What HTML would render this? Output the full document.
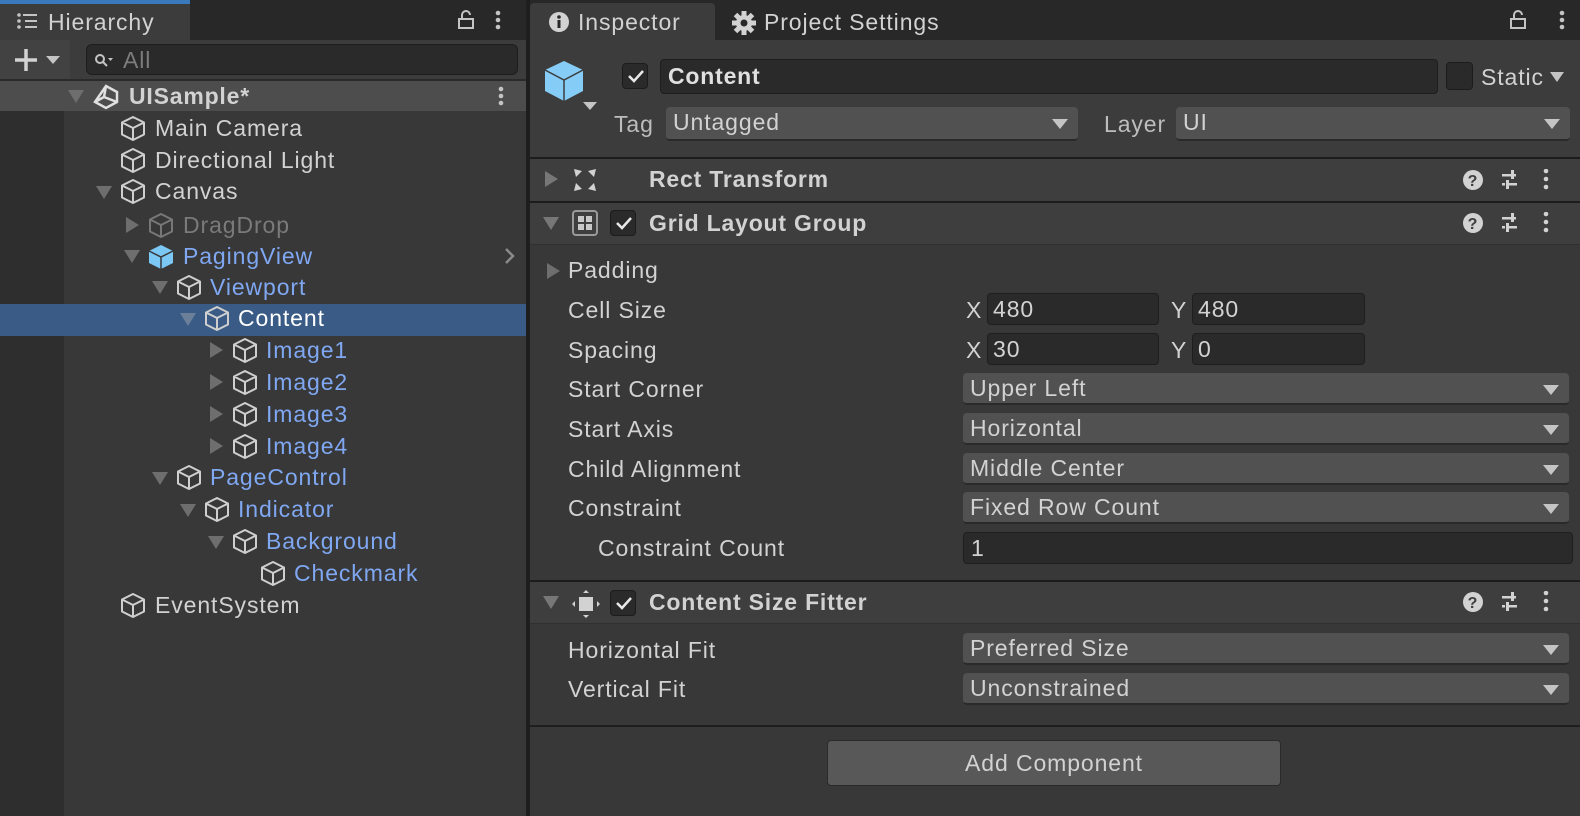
<!DOCTYPE html>
<html><head><meta charset="utf-8"><style>
*{margin:0;padding:0;box-sizing:border-box}
body{width:1580px;height:816px;background:#383838;font-family:"Liberation Sans",sans-serif;font-size:23px;letter-spacing:0.9px;color:#d2d2d2;position:relative;overflow:hidden}
.a{position:absolute}
.t{position:absolute;line-height:32px;white-space:nowrap}
.b{color:#7fa7f2}
.tri{position:absolute;width:0;height:0}
.down{border-left:8px solid transparent;border-right:8px solid transparent;border-top:13px solid #6e6e6e}
.right{border-top:8px solid transparent;border-bottom:8px solid transparent;border-left:13px solid #6e6e6e}
.dd{position:absolute;background:#515151;border-radius:4px;height:32px;border-bottom:2px solid #2a2a2a;padding-left:7px;line-height:31px}
.dd::after{content:"";position:absolute;right:10px;top:12px;border-left:8px solid transparent;border-right:8px solid transparent;border-top:10px solid #c4c4c4}
.fld{position:absolute;background:#2a2a2a;border:1px solid #1e1e1e;border-radius:4px;height:32px;padding-left:5px;line-height:30px}
.cb{position:absolute;width:26px;height:26px;background:#2a2a2a;border:1px solid #1c1c1c;border-radius:4px}
.hdr{position:absolute;left:530px;width:1050px;background:#3e3e3e;border-top:2px solid #1c1c1c}
.bold{font-weight:bold;letter-spacing:0.8px}
</style></head><body>
<div class="a" style="left:0;top:0;width:527px;height:40px;background:#282828"></div>
<div class="a" style="left:0;top:0;width:190px;height:4px;background:#3a79bb"></div>
<div class="a" style="left:0;top:4px;width:190px;height:36px;background:#3c3c3c"></div>
<svg class="a" style="left:16px;top:12px" width="24" height="20"><g fill="#c4c4c4"><circle cx="3" cy="3" r="1.8"/><circle cx="3" cy="9" r="1.8"/><circle cx="3" cy="15" r="1.8"/><rect x="7" y="2" width="14" height="2"/><rect x="9" y="8" width="12" height="2"/><rect x="9" y="14" width="12" height="2"/></g></svg>
<div class="t" style="left:48px;top:6px">Hierarchy</div>
<svg class="a" style="left:457px;top:9px" width="18" height="22"><path d="M2 10 V19 H16 V10 Z M5 10 V6 a4 4 0 0 1 8 0" fill="none" stroke="#c4c4c4" stroke-width="2"/></svg>
<svg class="a" style="left:494px;top:10px" width="8" height="22"><g fill="#c4c4c4"><circle cx="4" cy="3" r="2.3"/><circle cx="4" cy="10" r="2.3"/><circle cx="4" cy="17" r="2.3"/></g></svg>
<div class="a" style="left:0;top:40px;width:527px;height:41px;background:#3c3c3c"></div>
<div class="a" style="left:0;top:40px;width:70px;height:39px;background:#424242"></div>
<svg class="a" style="left:12px;top:47px" width="52" height="26"><path d="M3 13 H25 M14 2 V24" stroke="#d2d2d2" stroke-width="3.5"/><path d="M34 9 H48 L41 17 Z" fill="#c4c4c4"/></svg>
<div class="a" style="left:86px;top:44px;width:432px;height:31px;background:#2a2a2a;border:1px solid #1d1d1d;border-radius:6px"></div>
<svg class="a" style="left:94px;top:52px" width="22" height="16"><circle cx="6" cy="7" r="4" fill="none" stroke="#c4c4c4" stroke-width="2"/><path d="M9 10 L13 14" stroke="#c4c4c4" stroke-width="2"/><path d="M14 6 H19 L16.5 9Z" fill="#c4c4c4"/></svg>
<div class="t" style="left:123px;top:44px;color:#7c7c7c">All</div>
<div class="a" style="left:0;top:79px;width:527px;height:2px;background:#2a2a2a"></div>
<div class="a" style="left:0;top:81px;width:527px;height:30px;background:#4d4d4d"></div>
<div class="a" style="left:0;top:111px;width:64px;height:705px;background:#2e2e2e"></div>
<div class="a" style="left:0;top:304px;width:526px;height:32px;background:#395b85"></div>
<div class="tri down" style="left:68px;top:90px"></div>
<svg class="a" style="left:92px;top:83px" width="28" height="28"><path d="M14 3 L25 9 V19 L14 25 L3 19 Z M14 3 L12 14 L3 19 M12 14 L25 19" fill="none" stroke="#e0e0e0" stroke-width="2.5"/></svg>
<div class="t bold" style="left:129px;top:80px">UISample*</div>
<svg class="a" style="left:497px;top:86px" width="8" height="22"><g fill="#c4c4c4"><circle cx="4" cy="3" r="2.3"/><circle cx="4" cy="10" r="2.3"/><circle cx="4" cy="17" r="2.3"/></g></svg>
<svg width="0" height="0" style="position:absolute"><defs><g id="cube"><path d="M13 2 L24 7.5 V19.5 L13 25 L2 19.5 V7.5 Z M2 7.5 L13 13 L24 7.5 M13 13 V25" fill="none" stroke-width="2" stroke-linejoin="round"/></g></defs></svg>
<svg class="a" style="left:120px;top:115px" width="27" height="27" stroke="#cfcfcf"><use href="#cube"/></svg><div class="t" style="left:155px;top:112px">Main Camera</div>
<svg class="a" style="left:120px;top:147px" width="27" height="27" stroke="#cfcfcf"><use href="#cube"/></svg><div class="t" style="left:155px;top:144px">Directional Light</div>
<div class="tri down" style="left:96px;top:186px"></div>
<svg class="a" style="left:120px;top:178px" width="27" height="27" stroke="#cfcfcf"><use href="#cube"/></svg><div class="t" style="left:155px;top:175px">Canvas</div>
<div class="tri right" style="left:126px;top:217px"></div>
<svg class="a" style="left:148px;top:212px" width="27" height="27" stroke="#777"><use href="#cube"/></svg><div class="t" style="left:183px;top:209px;color:#7a7a7a">DragDrop</div>
<div class="tri down" style="left:124px;top:250px"></div>
<svg class="a" style="left:148px;top:243px" width="27" height="27"><path d="M13 2 L25 8 V20 L13 26 L1 20 V8 Z" fill="#7cc8f4"/><path d="M1 8 L13 14 L25 8 M13 14 V26" stroke="#383838" stroke-width="1.5" fill="none"/></svg><div class="t b" style="left:183px;top:240px">PagingView</div>
<svg class="a" style="left:504px;top:247px" width="12" height="18"><path d="M2 2 L9 9 L2 16" stroke="#8a8a8a" stroke-width="2.5" fill="none"/></svg>
<div class="tri down" style="left:152px;top:281px"></div>
<svg class="a" style="left:176px;top:274px" width="27" height="27" stroke="#cfcfcf"><use href="#cube"/></svg><div class="t b" style="left:210px;top:271px">Viewport</div>
<div class="tri down" style="left:180px;top:313px;border-top-color:#6b7f99"></div>
<svg class="a" style="left:204px;top:305px" width="27" height="27" stroke="#cfcfcf"><use href="#cube"/></svg><div class="t" style="left:238px;top:302px;color:#fff">Content</div>
<div class="tri right" style="left:210px;top:342px"></div>
<svg class="a" style="left:232px;top:337px" width="27" height="27" stroke="#cfcfcf"><use href="#cube"/></svg><div class="t b" style="left:266px;top:334px">Image1</div>
<div class="tri right" style="left:210px;top:374px"></div>
<svg class="a" style="left:232px;top:369px" width="27" height="27" stroke="#cfcfcf"><use href="#cube"/></svg><div class="t b" style="left:266px;top:366px">Image2</div>
<div class="tri right" style="left:210px;top:406px"></div>
<svg class="a" style="left:232px;top:401px" width="27" height="27" stroke="#cfcfcf"><use href="#cube"/></svg><div class="t b" style="left:266px;top:398px">Image3</div>
<div class="tri right" style="left:210px;top:438px"></div>
<svg class="a" style="left:232px;top:433px" width="27" height="27" stroke="#cfcfcf"><use href="#cube"/></svg><div class="t b" style="left:266px;top:430px">Image4</div>
<div class="tri down" style="left:152px;top:472px"></div>
<svg class="a" style="left:176px;top:464px" width="27" height="27" stroke="#cfcfcf"><use href="#cube"/></svg><div class="t b" style="left:210px;top:461px">PageControl</div>
<div class="tri down" style="left:180px;top:504px"></div>
<svg class="a" style="left:204px;top:496px" width="27" height="27" stroke="#cfcfcf"><use href="#cube"/></svg><div class="t b" style="left:238px;top:493px">Indicator</div>
<div class="tri down" style="left:208px;top:536px"></div>
<svg class="a" style="left:232px;top:528px" width="27" height="27" stroke="#cfcfcf"><use href="#cube"/></svg><div class="t b" style="left:266px;top:525px">Background</div>
<svg class="a" style="left:260px;top:560px" width="27" height="27" stroke="#cfcfcf"><use href="#cube"/></svg><div class="t b" style="left:294px;top:557px">Checkmark</div>
<svg class="a" style="left:120px;top:592px" width="27" height="27" stroke="#cfcfcf"><use href="#cube"/></svg><div class="t" style="left:155px;top:589px">EventSystem</div>
<div class="a" style="left:526px;top:0;width:4px;height:816px;background:#1e1e1e"></div>
<div class="a" style="left:530px;top:0;width:1050px;height:40px;background:#282828"></div>
<div class="a" style="left:530px;top:3px;width:185px;height:37px;background:#3c3c3c;border-radius:4px 4px 0 0"></div>
<svg class="a" style="left:548px;top:11px" width="22" height="22"><circle cx="11" cy="11" r="10" fill="#d2d2d2"/><rect x="9.5" y="9" width="3" height="8" fill="#282828"/><circle cx="11" cy="6" r="1.8" fill="#282828"/></svg>
<div class="t" style="left:578px;top:6px">Inspector</div>
<svg class="a" style="left:731px;top:10px" width="26" height="26" viewBox="0 0 26 26"><g fill="#d2d2d2"><circle cx="13" cy="13" r="8"/><g stroke="#d2d2d2" stroke-width="5"><path d="M13 1 V25 M1 13 H25 M4.5 4.5 L21.5 21.5 M21.5 4.5 L4.5 21.5"/></g></g><circle cx="13" cy="13" r="3.5" fill="#282828"/></svg>
<div class="t" style="left:764px;top:6px">Project Settings</div>
<svg class="a" style="left:1509px;top:9px" width="18" height="22"><path d="M2 10 V19 H16 V10 Z M5 10 V6 a4 4 0 0 1 8 0" fill="none" stroke="#c4c4c4" stroke-width="2"/></svg>
<svg class="a" style="left:1558px;top:10px" width="8" height="22"><g fill="#c4c4c4"><circle cx="4" cy="3" r="2.3"/><circle cx="4" cy="10" r="2.3"/><circle cx="4" cy="17" r="2.3"/></g></svg>
<div class="a" style="left:530px;top:40px;width:1050px;height:117px;background:#3c3c3c"></div>
<svg class="a" style="left:544px;top:60px" width="42" height="44"><path d="M20 1 L39 10 V31 L20 41 L1 31 V10 Z" fill="#85cdf7"/><path d="M1 10 L20 20 L39 10 M20 20 V41" stroke="#3c3c3c" stroke-width="1.5" fill="none"/></svg>
<div class="tri" style="left:583px;top:102px;border-left:7px solid transparent;border-right:7px solid transparent;border-top:8px solid #c4c4c4"></div>
<div class="cb" style="left:622px;top:63px"></div>
<svg class="a" style="left:626px;top:67px" width="20" height="18"><path d="M3 9 L8 14 L17 4" stroke="#e8e8e8" stroke-width="2.5" fill="none"/></svg>
<div class="fld bold" style="left:660px;top:59px;width:778px;height:35px;line-height:33px;padding-left:7px;color:#e0e0e0">Content</div>
<div class="cb" style="left:1446px;top:62px;width:27px;height:28px"></div>
<div class="t" style="left:1481px;top:61px">Static</div>
<div class="tri" style="left:1550px;top:72px;border-left:7px solid transparent;border-right:7px solid transparent;border-top:10px solid #c4c4c4"></div>
<div class="t" style="left:614px;top:108px;color:#bdbdbd">Tag</div>
<div class="dd" style="left:666px;top:107px;width:412px;height:34px">Untagged</div>
<div class="t" style="left:1104px;top:108px;color:#bdbdbd">Layer</div>
<div class="dd" style="left:1176px;top:107px;width:394px;height:34px">UI</div>
<div class="hdr" style="top:157px;height:44px"></div>
<div class="tri right" style="left:545px;top:171px;border-left-color:#777"></div>
<svg class="a" style="left:572px;top:167px" width="26" height="26"><g fill="#d2d2d2"><path d="M2 2 L10 4 L4 10Z M24 2 L16 4 L22 10Z M2 24 L10 22 L4 16Z M24 24 L16 22 L22 16Z"/></g></svg>
<div class="t bold" style="left:649px;top:163px">Rect Transform</div>
<svg width="0" height="0" style="position:absolute"><defs><g id="icons"><circle cx="11" cy="11" r="10" fill="#d2d2d2"/><text x="11" y="17" font-size="16" font-weight="bold" text-anchor="middle" fill="#3e3e3e" font-family="Liberation Sans">?</text><g fill="#d2d2d2"><rect x="40" y="5" width="14" height="2.5"/><rect x="40" y="14" width="3" height="2.5"/><rect x="46" y="14" width="9" height="2.5"/><rect x="49" y="1" width="3" height="9"/><rect x="44" y="11" width="3" height="9"/><circle cx="84" cy="2" r="2.3"/><circle cx="84" cy="10" r="2.3"/><circle cx="84" cy="18" r="2.3"/></g></g></defs></svg>
<svg class="a" style="left:1462px;top:169px" width="92" height="24"><use href="#icons"/></svg>
<div class="hdr" style="top:201px;height:43px"></div>
<div class="tri down" style="left:543px;top:217px;border-top-color:#777"></div>
<svg class="a" style="left:572px;top:210px" width="26" height="26"><rect x="1" y="1" width="24" height="24" rx="3" fill="none" stroke="#9a9a9a" stroke-width="2"/><g fill="#c8c8c8"><rect x="6" y="6" width="6" height="6"/><rect x="14" y="6" width="6" height="6"/><rect x="6" y="14" width="6" height="6"/><rect x="14" y="14" width="6" height="6"/></g></svg>
<div class="cb" style="left:610px;top:210px"></div>
<svg class="a" style="left:614px;top:214px" width="20" height="18"><path d="M3 9 L8 14 L17 4" stroke="#e8e8e8" stroke-width="2.5" fill="none"/></svg>
<div class="t bold" style="left:649px;top:207px">Grid Layout Group</div>
<svg class="a" style="left:1462px;top:212px" width="92" height="24"><use href="#icons"/></svg>
<div class="a" style="left:530px;top:244px;width:1050px;height:1px;background:#303030"></div>
<div class="tri right" style="left:547px;top:263px"></div>
<div class="t" style="left:568px;top:254px">Padding</div>
<div class="t" style="left:568px;top:294px">Cell Size</div>
<div class="t" style="left:966px;top:294px">X</div><div class="fld" style="left:987px;top:293px;width:172px">480</div>
<div class="t" style="left:1171px;top:294px">Y</div><div class="fld" style="left:1192px;top:293px;width:173px">480</div>
<div class="t" style="left:568px;top:334px">Spacing</div>
<div class="t" style="left:966px;top:334px">X</div><div class="fld" style="left:987px;top:333px;width:172px">30</div>
<div class="t" style="left:1171px;top:334px">Y</div><div class="fld" style="left:1192px;top:333px;width:173px">0</div>
<div class="t" style="left:568px;top:373px">Start Corner</div><div class="dd" style="left:963px;top:373px;width:606px">Upper Left</div>
<div class="t" style="left:568px;top:413px">Start Axis</div><div class="dd" style="left:963px;top:413px;width:606px">Horizontal</div>
<div class="t" style="left:568px;top:453px">Child Alignment</div><div class="dd" style="left:963px;top:453px;width:606px">Middle Center</div>
<div class="t" style="left:568px;top:492px">Constraint</div><div class="dd" style="left:963px;top:492px;width:606px">Fixed Row Count</div>
<div class="t" style="left:598px;top:532px">Constraint Count</div><div class="fld" style="left:963px;top:532px;width:610px;padding-left:7px">1</div>
<div class="hdr" style="top:580px;height:43px"></div>
<div class="tri down" style="left:543px;top:596px;border-top-color:#777"></div>
<svg class="a" style="left:572px;top:590px" width="28" height="28"><rect x="7" y="7" width="14" height="14" fill="#d2d2d2"/><g fill="#d2d2d2"><path d="M11 3 H17 L14 0Z M11 25 H17 L14 28Z M3 11 V17 L0 14Z M25 11 V17 L28 14Z"/></g></svg>
<div class="cb" style="left:610px;top:590px"></div>
<svg class="a" style="left:614px;top:594px" width="20" height="18"><path d="M3 9 L8 14 L17 4" stroke="#e8e8e8" stroke-width="2.5" fill="none"/></svg>
<div class="t bold" style="left:649px;top:586px">Content Size Fitter</div>
<svg class="a" style="left:1462px;top:591px" width="92" height="24"><use href="#icons"/></svg>
<div class="a" style="left:530px;top:623px;width:1050px;height:1px;background:#303030"></div>
<div class="t" style="left:568px;top:634px">Horizontal Fit</div><div class="dd" style="left:963px;top:633px;width:606px">Preferred Size</div>
<div class="t" style="left:568px;top:673px">Vertical Fit</div><div class="dd" style="left:963px;top:673px;width:606px">Unconstrained</div>
<div class="a" style="left:530px;top:725px;width:1050px;height:2px;background:#1e1e1e"></div>
<div class="a" style="left:827px;top:740px;width:454px;height:46px;background:#585858;border-radius:4px;border:1px solid #2a2a2a;text-align:center;line-height:44px">Add Component</div>
</body></html>
